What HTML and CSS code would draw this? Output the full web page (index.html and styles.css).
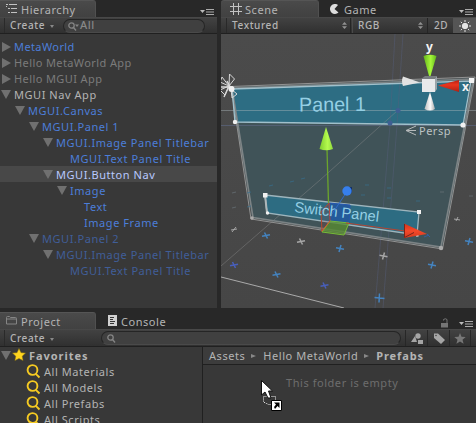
FILE: index.html
```html
<!DOCTYPE html>
<html lang="en">
<head>
<meta charset="utf-8">
<title>Scene editor</title>
<link rel="stylesheet" href="styles.css">
</head>
<body>
<main class="editor">
  <div class="upper">
    <section class="panel hierarchy">
      <header class="tabs">
        <div class="tab active">
          <svg class="tab-icon hierarchy-icon" viewBox="0 0 12 10"><path d="M0 .5h2M3 .5h8M2 4.5h2M5 4.5h6M2 8.5h2M5 8.5h6M.5 2v1"/></svg>
          <span>Hierarchy</span>
        </div>
        <svg class="menu" viewBox="0 0 14 6"><path class="fill" d="M0 1h5L2.5 4z"/><path d="M6 .5h8M6 3h8M6 5.5h8"/></svg>
      </header>
      <div class="toolbar">
        <button class="create">Create<i class="caret"></i></button>
        <div class="search"><svg viewBox="0 0 12 9"><circle cx="3.5" cy="3.5" r="2.7"/><path d="M5.5 5.5l2.5 3"/><path class="fill" d="M7 2.5h4L9 5z"/></svg><span>All</span></div>
      </div>
      <ul class="tree">
        <li class="d0 prefab tight"><i class="arrow right"></i><span>MetaWorld</span></li>
        <li class="d0 off tight"><i class="arrow right"></i><span>Hello MetaWorld App</span></li>
        <li class="d0 off tight"><i class="arrow right"></i><span>Hello MGUI App</span></li>
        <li class="d0"><i class="arrow"></i><span>MGUI Nav App</span></li>
        <li class="d1 prefab"><i class="arrow"></i><span>MGUI.Canvas</span></li>
        <li class="d2 prefab"><i class="arrow"></i><span>MGUI.Panel 1</span></li>
        <li class="d3 prefab"><i class="arrow"></i><span>MGUI.Image Panel Titlebar</span></li>
        <li class="d4 prefab"><i class="arrow none"></i><span>MGUI.Text Panel Title</span></li>
        <li class="d3 selected"><i class="arrow"></i><span>MGUI.Button Nav</span></li>
        <li class="d4 prefab"><i class="arrow"></i><span>Image</span></li>
        <li class="d5 prefab"><i class="arrow none"></i><span>Text</span></li>
        <li class="d5 prefab"><i class="arrow none"></i><span>Image Frame</span></li>
        <li class="d2 prefab-off"><i class="arrow"></i><span>MGUI.Panel 2</span></li>
        <li class="d3 prefab-off"><i class="arrow"></i><span>MGUI.Image Panel Titlebar</span></li>
        <li class="d4 prefab-off"><i class="arrow none"></i><span>MGUI.Text Panel Title</span></li>
      </ul>
    </section>

    <section class="panel scene">
      <header class="tabs">
        <div class="tab active">
          <svg class="tab-icon grid-icon" viewBox="0 0 12 12"><path d="M3.5 0v12M8.5 0v12M0 3.5h12M0 8.5h12"/></svg>
          <span>Scene</span>
        </div>
        <div class="tab">
          <svg class="tab-icon game-icon" viewBox="0 0 10 10"><path class="fill" d="M8 1A5 5 0 1 0 8.500 8.500L4.500 5Z"/></svg>
          <span>Game</span>
        </div>
        <svg class="menu" viewBox="0 0 14 6"><path class="fill" d="M0 1h5L2.500 4z"/><path d="M6 .5h8M6 3h8M6 5.5h8"/></svg>
      </header>
      <div class="toolbar">
        <button class="dropdown shading">Textured<i class="updown"></i></button>
        <button class="dropdown channel">RGB<i class="updown"></i></button>
        <button class="mode">2D</button>
        <button class="light"><svg viewBox="0 0 12 12"><circle cx="6" cy="6" r="2.700"/><path d="M6 0v2M6 10v2M0 6h2M10 6h2M1.800 1.800l1.300 1.300M8.900 8.900l1.300 1.300M1.800 10.200l1.300-1.300M8.900 3.100l1.300-1.300"/></svg></button>
      </div>
      <svg class="viewport" viewBox="221 34 255 274">
        <defs>
          <linearGradient id="green"><stop offset="0" stop-color="#65b51c"/><stop offset=".55" stop-color="#a6f73a"/><stop offset="1" stop-color="#62b81b"/></linearGradient>
          <linearGradient id="lime"><stop offset="0" stop-color="#7fcc2f"/><stop offset=".6" stop-color="#b5fb4e"/><stop offset="1" stop-color="#8ed83c"/></linearGradient>
          <linearGradient id="white"><stop offset="0" stop-color="#bbb"/><stop offset=".55" stop-color="#fafafa"/><stop offset="1" stop-color="#aaa"/></linearGradient>
          <linearGradient id="red" x2="0" y2="1"><stop offset="0" stop-color="#b52114"/><stop offset=".4" stop-color="#e9351d"/><stop offset="1" stop-color="#ac2015"/></linearGradient>
          <linearGradient id="orange" x2="0" y2="1"><stop offset="0" stop-color="#d43319"/><stop offset=".5" stop-color="#f5492a"/><stop offset="1" stop-color="#d43a1e"/></linearGradient>
          <linearGradient id="sky" x2="0" y2="1"><stop offset="0" stop-color="#4b4b4b"/><stop offset="1" stop-color="#464646"/></linearGradient>
          <path id="plus" d="M-4-.8L4 .8M1-3.500L-1 3.500"/>
          <path id="plus-left" d="M-4 .8L4-.8M-1.500-3L1.500 3"/>
        </defs>
        <rect x="221" y="34" width="255" height="274" fill="url(#sky)"/>
        <path d="M231 87L475 78L442 248L252 218Z" fill="#405358"/>
        <path d="M232 89L471 81L463 125L235 122Z" fill="#2d6d83"/>
        <g fill="none">
          <path d="M395 34L390 125L375 308M403 34L397 125L383 308" stroke="#56607c" stroke-opacity=".45"/>
          <path d="M221 266L320 180L397 111" stroke="#909090" stroke-opacity=".4"/>
          <path d="M221 110.500H476" stroke="#a8b3b9" stroke-opacity=".45"/>
          <path d="M221 125.500H476" stroke="#5c6783" stroke-opacity=".65"/>
          <path d="M221 277L344 308" stroke="#aaa"/>
          <path d="M232 88L473.500 79L441 247L253 217.500Z" stroke="#7c8385" stroke-width="1.600"/>
          <path d="M231 86.500L475 77L442.500 249L251 219Z" stroke="#a4a6a6" stroke-width=".8"/>
          <path d="M232 89L471 81L463 125L235 122Z" stroke="#a1c0cb" stroke-width="1.300"/>
        </g>
        <g fill="none" stroke="#347193" stroke-opacity=".65">
          <path d="M247 193l4-1M247 207l4-1M301 179l4-1M269 186l4-1M290 182l4-1M361 195h4M387 198h4M416 201h4M365 185h4M387 188h4"/>
          <path d="M440 192h4M469 196h4M232 193l4-1M232 208l4-1" stroke="#6c767d"/>
        </g>
        <path d="M265 195L419 212L417 235L267 213Z" fill="#2d6c82" stroke="#9eb5bd" stroke-width="1.300"/>
        <path d="M265 195L267 213" stroke="#aeb7b9" stroke-width="2"/>
        <text class="canvas-text title" x="299" y="111.500" textLength="67" lengthAdjust="spacingAndGlyphs" transform="rotate(-.5 299 112)">Panel 1</text>
        <g fill="#f1f1f1">
          <circle cx="235" cy="122" r="2.200"/><circle cx="463" cy="125" r="2.600"/><rect x="469" y="78" width="5" height="5"/>
          <rect x="263" y="193" width="4.500" height="4.500"/><circle cx="267.500" cy="213" r="1.700"/><rect x="417" y="210" width="4" height="4"/><rect x="416" y="234" width="2.500" height="2.500"/>
        </g>
        <circle cx="441" cy="248" r="2.200" fill="#aaa"/><circle cx="252" cy="218" r="1.800" fill="#aaa"/>
        <g fill="#3e5f93"><circle cx="398" cy="110.500" r="2.500"/><circle cx="390" cy="123" r="2.500"/></g>
        <g fill="none" stroke-width="1.500">
          <g stroke="#4483bf"><use href="#plus-left" x="266" y="235.500"/><use href="#plus" x="340" y="248.500"/><use href="#plus-left" x="276.500" y="274.500"/><use href="#plus" x="469" y="241.500"/><use href="#plus" x="432" y="265"/><path d="M374.500 297.500l10 1M379.500 293.500l-.5 9"/></g>
          <g stroke="#485fbb"><use href="#plus-left" x="234" y="265"/><use href="#plus-left" x="324.500" y="285.500"/></g>
          <g stroke="#a6a6a6"><use href="#plus-left" x="301" y="241.500"/><use href="#plus" x="383.500" y="256"/><path d="M231 230l6-1M236 227l-4 5M454 219l6 1M458 217l-2 4" stroke-width="1"/></g>
        </g>
        <path d="M329 203L350 205L349 223L330 221Z" fill="#2052a8" fill-opacity=".65" stroke="#2555af"/>
        <path d="M322 232L321 212L329 203L330 221Z" fill="#94403b" fill-opacity=".2" stroke="#b9482c"/>
        <path d="M322 232L330 221L349 223L344 235Z" fill="#568a32" fill-opacity=".8" stroke="#77ba38"/>
        <text class="canvas-text button-label" x="294" y="212" textLength="85" lengthAdjust="spacingAndGlyphs" transform="rotate(6.600 294 212)">Switch Panel</text>
        <path d="M328.500 203L327 149" stroke="#6ba52c" stroke-width="1.300"/>
        <path d="M322 231L330 221" stroke="#d9552a"/>
        <path d="M332 214L346 193" stroke="#3169c6"/>
        <path d="M346 223L405 231" stroke="#b64532"/>
        <path d="M326 127L319.500 149Q326 151.500 333 149Z" fill="url(#lime)"/>
        <path d="M347 187h5v6z" fill="#142f64"/><circle cx="347" cy="191" r="4.700" fill="#367fec"/>
        <path d="M404 223.500L427 234L404 238Z" fill="url(#orange)"/>
        <path d="M404.500 224V237.500L414 232.500" fill="none" stroke="#7a2419"/>
        <path d="M427 234l3 3M424 237l5-2" stroke="#3260a2"/>
        <g stroke="#d8d8d8" stroke-width="1" fill="none">
          <path d="M229 86L222 77L220 82ZM229 86L229.500 74L234.500 79ZM229 86L220 90L225 95ZM231 89L232 98L237 94Z"/>
          <path d="M229 86L224 97M221 87H233M227 81L233 92" stroke-width="1.400"/>
        </g>
        <circle cx="231.500" cy="89" r="3" fill="#eee"/>
        <path d="M423.500 56Q430 53.500 436.500 56L430.500 76H429Z" fill="url(#green)"/>
        <path d="M403 76.500L420 82.500L403 86Q401 81 403 76.500Z" fill="#e2e2e2"/>
        <path d="M430 92L435 109Q430 112 424.500 109Z" fill="url(#white)"/>
        <path d="M438 85.500L459 80V92Z" fill="url(#red)"/>
        <path d="M421 79L425 76H437L435 79Z" fill="#777c80"/><path d="M435 79L437 76L437 89L435 92Z" fill="#9ba5aa"/><rect x="422" y="79" width="13" height="13" fill="#e7e9eb"/>
        <text class="axis" x="426" y="51">y</text><text class="axis" x="462" y="91">x</text>
        <path d="M416 126L406 130.500L416 135M406 130.500H416" fill="none" stroke="#b5b9ba"/>
        <text class="persp" x="419" y="135" textLength="32">Persp</text>
      </svg>
    </section>
  </div>

  <section class="project">
    <header class="tabs">
      <div class="tab active">
        <svg class="tab-icon folder-icon" viewBox="0 0 11 9"><path d="M.5 8V1.500q0-1 1-1h2l1 1h5q1 0 1 1V8zM.5 3h10"/></svg>
        <span>Project</span>
      </div>
      <div class="tab console">
        <svg class="tab-icon console-icon" viewBox="0 0 9 11"><path class="fill" d="M0 0h9v11H0z"/><path class="ink" d="M2 2.500h4M2 4.500h3M2 6.500h5M2 8.500h4"/></svg>
        <span>Console</span>
      </div>
      <svg class="lock" viewBox="0 0 8 10"><path d="M0 5h7v4.500H0z"/><path class="shackle" d="M2.500 2.500V1.500q2-1.500 3.500 0V5"/></svg>
      <svg class="menu" viewBox="0 0 14 6"><path class="fill" d="M0 1h5L2.500 4z"/><path d="M6 .5h8M6 3h8M6 5.500h8"/></svg>
    </header>
    <div class="toolbar">
      <button class="create">Create<i class="caret"></i></button>
      <div class="search"><svg viewBox="0 0 12 9"><circle cx="3.500" cy="3.500" r="2.700"/><path d="M5.500 5.500l2.500 3"/></svg></div>
      <button class="filter"><svg viewBox="0 0 12 11"><circle cx="7" cy="3" r="2.700"/><path d="M4 3L0 9h6zM7 7h5v4H7z"/></svg></button>
      <button class="filter"><svg viewBox="0 0 12 11"><path d="M1 .5h4L12 7l-4 4L1 5z"/><circle class="hole" cx="3" cy="2.500" r=".8"/></svg></button>
      <button class="filter star"><svg viewBox="0 0 12 11"><path d="M6 0l1.500 3.800 4.200.2-3.200 2.700 1.100 4L6 8.500l-3.600 2.200 1.100-4L.3 4l4.200-.2z"/></svg></button>
    </div>
    <div class="browser">
      <ul class="favorites">
        <li class="heading"><i class="arrow"></i><svg class="fav-star" viewBox="0 0 14 13"><path d="M7 .5l2 4.200 4.500.4-3.300 3.100.9 4.400L7 10.500l-4.100 2.100.9-4.400L.5 5.100 5 4.700z"/></svg><span>Favorites</span></li>
        <li><svg class="glass" viewBox="0 0 15 15"><circle cx="6.500" cy="6" r="4.900"/><path d="M9.800 9.800l3.700 3.700"/></svg><span>All Materials</span></li>
        <li><svg class="glass" viewBox="0 0 15 15"><circle cx="6.500" cy="6" r="4.900"/><path d="M9.800 9.800l3.700 3.700"/></svg><span>All Models</span></li>
        <li><svg class="glass" viewBox="0 0 15 15"><circle cx="6.500" cy="6" r="4.900"/><path d="M9.800 9.800l3.700 3.700"/></svg><span>All Prefabs</span></li>
        <li><svg class="glass" viewBox="0 0 15 15"><circle cx="6.500" cy="6" r="4.900"/><path d="M9.800 9.800l3.700 3.700"/></svg><span>All Scripts</span></li>
      </ul>
      <div class="folder">
        <nav class="crumbs"><span>Assets</span><i></i><span>Hello MetaWorld</span><i></i><b>Prefabs</b></nav>
        <p class="empty">This folder is empty</p>
      </div>
    </div>
  </section>
  <svg class="cursor" viewBox="0 0 23 33">
    <path d="M2.500 19.500V16.500H14.500V24.500H7.500L2.500 22Z" fill="none" stroke="#eee" stroke-dasharray="1 1"/>
    <path d="M.5 .5V15L4 12L7 18H10L7.500 11H11.500Z" fill="#fff" stroke="#111"/>
    <path d="M10.500 20.500h10v10h-10z" fill="#fff" stroke="#000"/>
    <path d="M13 22.500h5.500V28l-2-2-2.500 3-1-2 2-2.500z" fill="#000"/>
  </svg>
</main>
</body>
</html>
```

FILE: styles.css
```css
* { box-sizing: border-box; }
body { margin: 0; background: #282828; }
ul, p { margin: 0; padding: 0; list-style: none; }
button { border: 0; padding: 0; background: none; color: inherit; font: inherit; letter-spacing: inherit; text-align: left; }
svg { display: block; flex: none; }

.editor {
  position: relative;
  width: 476px;
  height: 423px;
  overflow: hidden;
  display: flex;
  flex-direction: column;
  gap: 4px;
  color: #b4b4b4;
  font: 11px/16px "Noto Sans", "DejaVu Sans", sans-serif;
  letter-spacing: .55px;
  white-space: nowrap;
}
.upper { display: flex; gap: 4px; height: 308px; }
.panel { display: flex; flex-direction: column; }
.hierarchy { width: 217px; background: #383838; }
.scene { width: 255px; }

.tabs { display: flex; height: 17px; flex: none; background: #282828; align-items: flex-end; position: relative; }
.tab { height: 17px; display: flex; align-items: center; padding-top: 2px; }
.tab.active { background: linear-gradient(#4a4a4a, #414141); border-top: 1px solid #555; border-right: 1px solid #505050; border-radius: 0 3px 0 0; padding-top: 1px; width: 96px; }
.scene .tab.active { width: 98px; border-radius: 3px 3px 0 0; }
.tab-icon { fill: none; stroke: #c2c2c2; }
.fill { fill: #bbb; stroke: none; }
.hierarchy-icon { width: 12px; height: 10px; margin: 0 3px 2px 6px; }
.grid-icon { width: 12px; height: 12px; margin: 0 3px 2px 9px; }
.game-icon { width: 10px; height: 10px; margin: 0 4px 2px 11px; }
.game-icon .fill { fill: #ddd; }
.folder-icon { width: 11px; height: 9px; margin: 0 4px 2px 6px; stroke: #858585; }
.console-icon { width: 9px; height: 11px; margin: 0 4px 2px 12px; }
.console-icon .fill { fill: #d0d0d0; }
.console-icon .ink { stroke: #333; }
.menu { width: 14px; height: 6px; margin: 0 3px 2px auto; fill: none; stroke: #aaa; }

.toolbar { display: flex; height: 17px; flex: none; background: linear-gradient(#424242, #303030); border-top: 1px solid #484848; border-bottom: 1px solid #202020; font-size: 10px; font-weight: 500; line-height: 15px; letter-spacing: .6px; }
.create { width: 53px; margin-left: 4px; padding-left: 5px; border-left: 1px solid #2a2a2a; display: flex; align-items: center; }
.caret { border: 2.500px solid transparent; border-top: 3px solid #888; border-bottom: 0; margin: 2px 0 0 5px; }
.search { background: #404040; border: 1px solid #252525; border-bottom-color: #4a4a4a; border-radius: 8px; height: 14px; margin-top: 1px; display: flex; align-items: center; color: #888; font-size: 11px; line-height: 12px; }
.search svg { width: 12px; height: 9px; fill: none; stroke: #858585; stroke-width: 1.300; }
.search span { padding-bottom: 2px; }
.search .fill { fill: #858585; stroke: none; }
.hierarchy .search { margin-left: 6px; width: 142px; padding-left: 4px; }

.tree { padding-top: 4px; }
.tree li { display: flex; height: 16px; align-items: center; }
.tree span { padding-top: 1px; }
.tight { letter-spacing: .4px; }
.arrow { width: 0; height: 0; flex: none; border: 5px solid transparent; border-top: 9px solid #707070; border-bottom: 0; margin-right: 3px; }
.arrow.right { border: 5px solid transparent; border-left: 9px solid #707070; border-right: 0; }
.arrow.none { border-color: transparent; }
.d0 { padding-left: 1px; }
.d0 .right { margin: 1px 3px 0 1px; }
.d1 { padding-left: 15px; }
.d2 { padding-left: 29px; }
.d3 { padding-left: 43px; }
.d4 { padding-left: 57px; }
.d5 { padding-left: 71px; }
.prefab { color: #4c7ed8; }
.prefab-off { color: #405e98; }
.off { color: #7b7b7b; }
.tree .selected { background: #484848; color: #b8c9ff; }

.dropdown { display: flex; align-items: center; justify-content: space-between; border-right: 1px solid #252525; }
.shading { width: 125px; margin-left: 5px; padding: 0 3px 0 5px; border-left: 1px solid #292929; }
.channel { width: 76px; padding: 0 4px 0 5px; border-left: 1px solid #4a4a4a; margin-left: 1px; }
.updown { width: 5px; height: 7px; background: #929292; clip-path: polygon(50% 0, 100% 40%, 0 40%, 0 60%, 100% 60%, 50% 100%, 0 60%, 0 40%); }
.mode { width: 25px; padding-left: 6px; }
.light { flex: 1; background: #555; display: flex; align-items: center; justify-content: center; }
.light svg { width: 12px; height: 12px; fill: #e4e4e4; stroke: #e4e4e4; }
.viewport { width: 255px; height: 274px; }
.canvas-text { font-family: "Liberation Sans", sans-serif; fill: #94cfe4; letter-spacing: 0; }
.title { font-size: 20px; }
.button-label { font-size: 15px; }
.axis { font: bold 12px "Noto Sans", sans-serif; fill: #f4f4f4; letter-spacing: 0; }
.persp { font-size: 11px; fill: #bdc3c4; }

.project { height: 111px; display: flex; flex-direction: column; background: #383838; }
.lock { width: 8px; height: 10px; margin: 0 10px 1px auto; fill: #757575; }
.shackle { fill: none; stroke: #757575; }
.lock + .menu { margin-left: 0; }
.project .toolbar { height: 18px; }
.project .search { width: 300px; margin-left: 44px; padding-left: 5px; }
.filter { width: 22px; border-left: 1px solid #272727; display: flex; align-items: center; justify-content: center; }
.search + .filter { margin-left: 4px; }
.filter svg { width: 12px; height: 11px; fill: #a5a5a5; }
.filter .hole { fill: #444; }
.filter.star { border-right: 1px solid #272727; }
.star svg { fill: #777; }

.browser { display: flex; flex: 1; min-height: 0; }
.favorites { width: 203px; border-right: 1px solid #202020; }
.favorites li { display: flex; height: 16px; align-items: center; padding-left: 26px; }
.favorites span { padding-top: 1px; }
.favorites .heading { padding-left: 1px; font-weight: bold; letter-spacing: .95px; }
.fav-star { width: 14px; height: 13px; margin: 0 3px 1px 0; fill: #ffd51f; stroke: #8c7411; stroke-width: .5; }
.heading .arrow { margin-right: 1px; }
.glass { width: 15px; height: 15px; margin-right: 3px; fill: none; stroke: #f5ca22; stroke-width: 1.900; }
.folder { flex: 1; }
.crumbs { height: 18px; border-bottom: 1px solid #202020; background: #3c3c3c; display: flex; align-items: center; padding-left: 6px; }
.crumbs i { border: 2.500px solid transparent; border-left: 5px solid #888; border-right: 0; margin: 0 7px 0 6px; }
.crumbs b { letter-spacing: .9px; }
.empty { padding: 10px 0 0 83px; color: #6d6d6d; }
.cursor { position: absolute; left: 261px; top: 380px; width: 23px; height: 33px; }
```
